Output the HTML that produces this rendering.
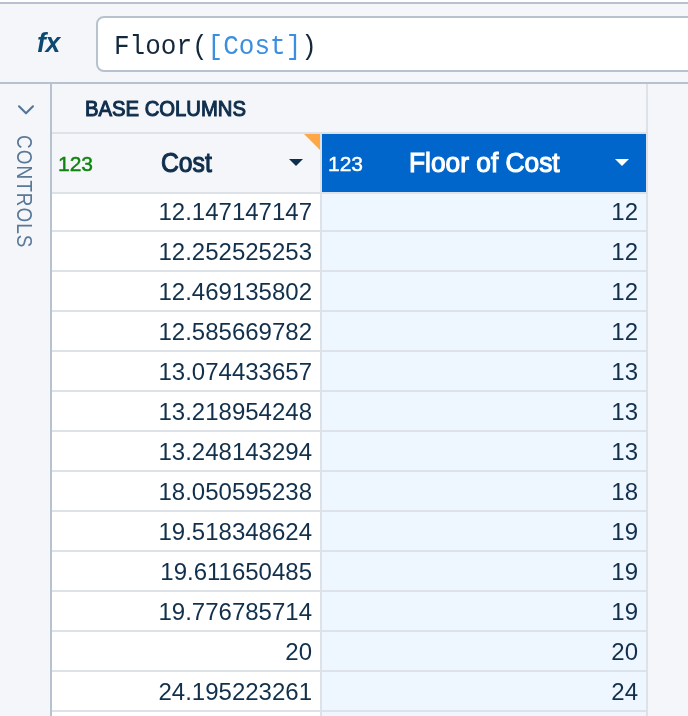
<!DOCTYPE html>
<html><head><meta charset="utf-8">
<style>
*{margin:0;padding:0;box-sizing:border-box;}
html,body{width:688px;height:716px;overflow:hidden;background:#f5f6fa;font-family:"Liberation Sans",sans-serif;}
.abs{position:absolute;}
#topwhite{left:0;top:0;width:688px;height:2px;background:#fff;}
#topline{left:0;top:2px;width:688px;height:2px;background:#b6c2cf;}
#fx{left:36.5px;top:27px;font:italic bold 28px "Liberation Sans",sans-serif;color:#0d4a72;letter-spacing:-0.5px;transform-origin:0 0;transform:scaleX(0.95);}
#input{left:96px;top:16px;width:620px;height:56px;background:#fff;border:2px solid #b6c2cf;border-radius:8px;}
#formula{left:114px;top:32px;font:27px "Liberation Mono",monospace;color:#14283c;white-space:pre;transform-origin:0 0;transform:scaleX(0.963);}
#formula span{color:#3b8ee0;}
#line2{left:0;top:82px;width:688px;height:2px;background:#b6c2cf;}
#sideline{left:50px;top:84px;width:2px;height:632px;background:#b6c2cf;}
#chev{left:16px;top:103px;}
#controls{left:13px;top:135px;width:24px;height:110px;}
#controls div{position:absolute;left:0;top:0;transform-origin:0 0;transform:translate(24px,0) rotate(90deg) scaleX(0.86);font:22px "Liberation Sans",sans-serif;color:#5a7898;white-space:nowrap;letter-spacing:1.2px;}
#base{left:85px;top:96px;font:22px "Liberation Sans",sans-serif;color:#0f2f4d;white-space:nowrap;transform-origin:0 0;transform:scaleX(0.921);-webkit-text-stroke:1.1px currentColor;}
#rline{left:646px;top:84px;width:2px;height:632px;background:#dde1e8;}
#hline{left:52px;top:132px;width:594px;height:2px;background:#dde1e8;}
#h1{left:52px;top:134px;width:268px;height:58px;background:#f5f6fa;}
#h2{left:322px;top:134px;width:324px;height:58px;background:#0066cc;}
#vsep{left:320px;top:134px;width:2px;height:582px;background:#dde1e8;}
#hbot{left:52px;top:192px;width:594px;height:2px;background:#dde1e8;}
#tri{left:304px;top:134px;width:0;height:0;border-top:16px solid #ffa745;border-left:16px solid transparent;}
.n123{font:21px "Liberation Sans",sans-serif;-webkit-text-stroke:0.45px currentColor;}
#g123{left:58px;top:152px;color:#0f840f;}
#w123{left:328px;top:152px;color:#fff;}
.hdr{font:27px "Liberation Sans",sans-serif;white-space:nowrap;transform-origin:0 0;-webkit-text-stroke:1.1px currentColor;}
#cost{left:161px;top:148px;color:#0f2f4d;transform:scaleX(0.915);}
#floor{left:409px;top:148px;color:#fff;transform:scaleX(0.975);}
.car{width:0;height:0;border-left:7px solid transparent;border-right:7px solid transparent;}
#car1{left:289px;top:159px;border-top:7px solid #0f2f4d;}
#car2{left:615px;top:159px;border-top:7px solid #fff;}
#rows{left:52px;top:194px;width:594px;}
.row{position:relative;height:40px;}
.row .c1{position:absolute;left:0;top:0;width:268px;height:38px;background:#fff;}
.row .c2{position:absolute;left:270px;top:0;width:324px;height:38px;background:#eef6ff;}
.row .b{position:absolute;left:0;top:38px;width:594px;height:2px;background:#dde1e8;}
.row .t1{position:absolute;right:334px;top:6px;font:24px "Liberation Sans",sans-serif;color:#12304c;}
.row .t2{position:absolute;right:8px;top:6px;font:24px "Liberation Sans",sans-serif;color:#12304c;}
</style></head><body><div style="position:absolute;left:0;top:0;width:688px;height:716px;will-change:transform">
<div id="topwhite" class="abs"></div>
<div id="topline" class="abs"></div>
<div id="fx" class="abs">fx</div>
<div id="input" class="abs"></div>
<div id="formula" class="abs">Floor(<span>[Cost]</span>)</div>
<div id="line2" class="abs"></div>
<div id="sideline" class="abs"></div>
<svg id="chev" class="abs" width="20" height="14" viewBox="0 0 20 14"><path d="M3 3.3 L10 10.3 L17 3.3" fill="none" stroke="#52759a" stroke-width="2.1" stroke-linecap="round" stroke-linejoin="round"/></svg>
<div id="controls" class="abs"><div>CONTROLS</div></div>
<div id="base" class="abs">BASE COLUMNS</div>
<div id="rline" class="abs"></div>
<div id="hline" class="abs"></div>
<div id="h1" class="abs"></div>
<div id="h2" class="abs"></div>
<div id="hbot" class="abs"></div>
<div id="tri" class="abs"></div>
<div id="g123" class="abs n123">123</div>
<div id="w123" class="abs n123">123</div>
<div id="cost" class="abs hdr">Cost</div>
<div id="floor" class="abs hdr">Floor of Cost</div>
<div id="car1" class="abs car"></div>
<div id="car2" class="abs car"></div>
<div id="rows" class="abs">
<div class="row" style="height:38px"><div class="c1" style="height:36px"></div><div class="c2" style="height:36px"></div><div class="b" style="top:36px"></div><div class="t1" style="top:4px">12.147147147</div><div class="t2" style="top:4px">12</div></div>
<div class="row"><div class="c1"></div><div class="c2"></div><div class="b"></div><div class="t1">12.252525253</div><div class="t2">12</div></div>
<div class="row"><div class="c1"></div><div class="c2"></div><div class="b"></div><div class="t1">12.469135802</div><div class="t2">12</div></div>
<div class="row"><div class="c1"></div><div class="c2"></div><div class="b"></div><div class="t1">12.585669782</div><div class="t2">12</div></div>
<div class="row"><div class="c1"></div><div class="c2"></div><div class="b"></div><div class="t1">13.074433657</div><div class="t2">13</div></div>
<div class="row"><div class="c1"></div><div class="c2"></div><div class="b"></div><div class="t1">13.218954248</div><div class="t2">13</div></div>
<div class="row"><div class="c1"></div><div class="c2"></div><div class="b"></div><div class="t1">13.248143294</div><div class="t2">13</div></div>
<div class="row"><div class="c1"></div><div class="c2"></div><div class="b"></div><div class="t1">18.050595238</div><div class="t2">18</div></div>
<div class="row"><div class="c1"></div><div class="c2"></div><div class="b"></div><div class="t1">19.518348624</div><div class="t2">19</div></div>
<div class="row"><div class="c1"></div><div class="c2"></div><div class="b"></div><div class="t1">19.611650485</div><div class="t2">19</div></div>
<div class="row"><div class="c1"></div><div class="c2"></div><div class="b"></div><div class="t1">19.776785714</div><div class="t2">19</div></div>
<div class="row"><div class="c1"></div><div class="c2"></div><div class="b"></div><div class="t1">20</div><div class="t2">20</div></div>
<div class="row"><div class="c1"></div><div class="c2"></div><div class="b"></div><div class="t1">24.195223261</div><div class="t2">24</div></div>
<div class="row"><div class="c1"></div><div class="c2"></div><div class="b"></div></div>
</div>
<div id="vsep" class="abs"></div>
</div></body></html>
